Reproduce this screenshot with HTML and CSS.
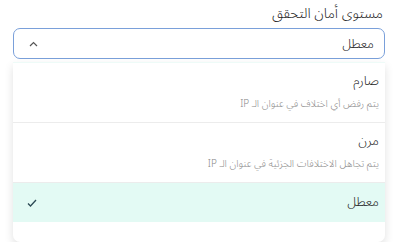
FILE: index.html
```html
<!DOCTYPE html>
<html lang="ar" dir="rtl">
<head>
  <meta charset="UTF-8">
  <title>مستوى أمان التحقق</title>
  <link rel="stylesheet" href="styles.css">
</head>
<body>
  <div class="field">
    <label class="label">مستوى أمان التحقق</label>
    <div class="select">
      <span class="value">معطل</span>
      <svg class="chevron" width="9" height="6" viewBox="0 0 9 6"><path d="M1 5 L4.5 1.5 L8 5" fill="none" stroke="#555" stroke-width="1.2"/></svg>
    </div>
    <ul class="menu">
      <li class="item">
        <p class="title">صارم</p>
        <p class="desc">يتم رفض أي اختلاف في عنوان الـ IP</p>
      </li>
      <li class="item">
        <p class="title">مرن</p>
        <p class="desc">يتم تجاهل الاختلافات الجزئية في عنوان الـ IP</p>
      </li>
      <li class="item active">
        <p class="title">معطل</p>
        <svg class="check" width="10" height="8" viewBox="0 0 10 8"><path d="M1 4.5 L3.5 7 L9 1" fill="none" stroke="#2d4a55" stroke-width="1.3"/></svg>
      </li>
    </ul>
  </div>
</body>
</html>
```
FILE: styles.css
```css
*{
  margin: 0;
  padding: 0;
  box-sizing: border-box;
}
body{
  background: #fff;
  font-family: "Noto Sans Arabic", "Noto Sans", sans-serif;
  font-weight: 350;
  color: #222;
}
.field{
  width: 372px;
  margin: 2px 10px 0 13px;
}
.label{
  display: block;
  font-size: 14px;
  line-height: 23px;
  margin-bottom: 3px;
  padding-right: 2px;
}
.select{
  height: 31px;
  border: 1.5px solid #7aa0da;
  border-radius: 7px;
  display: flex;
  align-items: center;
  justify-content: space-between;
  padding: 0 10px 0 15px;
}
.value{
  font-size: 13px;
  line-height: 24px;
}
.menu{
  list-style: none;
  margin-top: 3px;
  background: #fff;
  border-top: 1px solid #eefbf8;
  border-radius: 0 0 7px 7px;
  box-shadow: 0 4px 10px rgba(0,0,0,0.12);
  padding-bottom: 20px;
}
.item{
  border-bottom: 1px solid #ececec;
  padding: 6px 6px 0 12px;
  height: 60px;
}
.title{
  font-size: 13px;
  line-height: 25px;
}
.desc{
  font-size: 10px;
  line-height: 20px;
  color: #888;
}
.item.active{
  background: #e3faf4;
  height: 39px;
  border-bottom: none;
  display: flex;
  align-items: center;
  justify-content: space-between;
  padding: 0 6px 0 14px;
}
.check{
  display: block;
}
```
